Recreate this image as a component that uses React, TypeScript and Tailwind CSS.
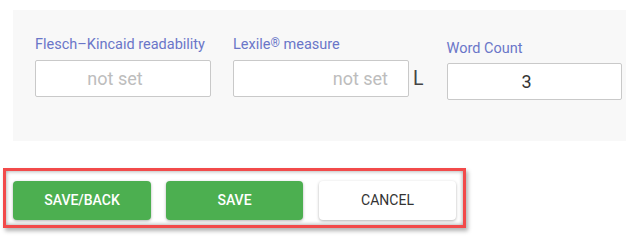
import React from "react";

export default function App() {
  return (
    <div className="w-[626px] h-[238px] bg-white overflow-hidden" style={{ fontFamily: "Roboto, 'Liberation Sans', sans-serif" }}>
      <div className="ml-[13px] mt-[10px] h-[131px] bg-[#f8f8f8] pl-[22px] pt-[26px] flex items-start">
        <div className="flex flex-col w-[176px]">
          <div className="text-[14.5px] leading-[17px] text-[#6a76c8] h-[17px] mb-[7px] whitespace-nowrap">Flesch–Kincaid readability</div>
          <div className="h-[37px] border border-[#c9c9c9] rounded-[2px] bg-white flex items-center justify-center pr-[16px] text-[18px] text-[#bdbdbd]">not set</div>
        </div>
        <div className="flex items-end ml-[22px]">
          <div className="flex flex-col w-[176px]">
            <div className="text-[14.5px] leading-[17px] text-[#6a76c8] h-[17px] mb-[7px] whitespace-nowrap">
              Lexile<sup className="text-[12px] relative top-[-2px]">®</sup> measure
            </div>
            <div className="h-[37px] border border-[#c9c9c9] rounded-[2px] bg-white flex items-center justify-end pr-[20px] text-[18px] text-[#bdbdbd]">not set</div>
          </div>
          <div className="h-[37px] flex items-center ml-[4px] text-[19.5px] text-[#444]">L</div>
        </div>
        <div className="flex flex-col w-[175px] ml-[23px] pt-[4px]">
          <div className="text-[14.5px] leading-[17px] text-[#6a76c8] h-[17px] mb-[6px] whitespace-nowrap">Word Count</div>
          <div className="h-[37px] border border-[#c9c9c9] rounded-[2px] bg-white flex items-center justify-center pr-[15px] text-[18px] text-[#333]">3</div>
        </div>
      </div>
      <div className="ml-[3px] mt-[27px] w-[463px] h-[60px] border-[3px] border-[#f24a4a] shadow-[2px_3px_4px_rgba(0,0,0,0.3)]">
        <div className="w-full h-full shadow-[inset_0_0_4px_rgba(0,0,0,0.4)] flex items-start pl-[7px] pt-[10px] gap-[15px]">
          <button className="w-[138px] h-[39px] rounded-[4px] bg-[#4caf50] text-white text-[14px] font-medium shadow-[0_1px_3px_rgba(0,0,0,0.3)]">SAVE/BACK</button>
          <button className="w-[137px] h-[39px] rounded-[4px] bg-[#4caf50] text-white text-[14px] font-medium shadow-[0_1px_3px_rgba(0,0,0,0.3)]">SAVE</button>
          <button className="ml-[1px] w-[137px] h-[39px] rounded-[4px] bg-white text-[#333] text-[14px] shadow-[0_1px_3px_rgba(0,0,0,0.3)]">CANCEL</button>
        </div>
      </div>
    </div>
  );
}
